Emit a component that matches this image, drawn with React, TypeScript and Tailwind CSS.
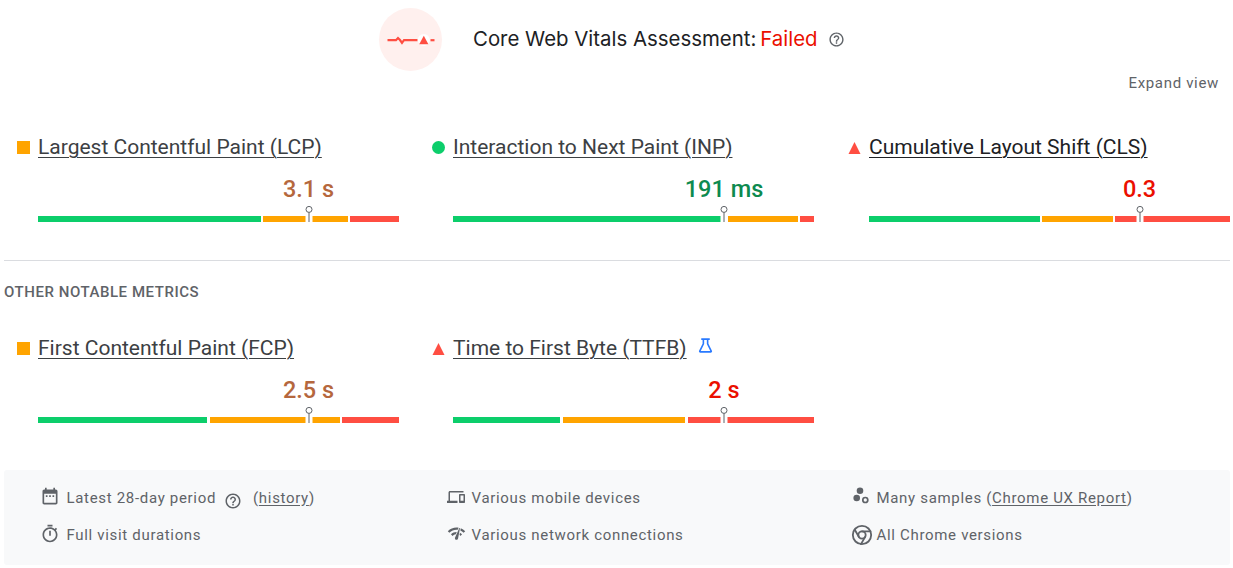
import { Chrome } from "lucide-react";
import type { ReactNode } from "react";

type Rating = "good" | "avg" | "poor";

interface Metric {
  name: string;
  value: string;
  rating: Rating;
  segments: [number, number, number];
  marker: number;
  experimental?: boolean;
  dark?: boolean;
}

const row1: Metric[] = [
  { name: "Largest Contentful Paint (LCP)", value: "3.1 s", rating: "avg", segments: [223, 85, 49], marker: 270.5 },
  { name: "Interaction to Next Paint (INP)", value: "191 ms", rating: "good", segments: [272, 70, 14], marker: 271 },
  { name: "Cumulative Layout Shift (CLS)", value: "0.3", rating: "poor", segments: [171, 71, 115], marker: 270.5, dark: true },
];

const row2: Metric[] = [
  { name: "First Contentful Paint (FCP)", value: "2.5 s", rating: "avg", segments: [169, 130, 57], marker: 270.5 },
  { name: "Time to First Byte (TTFB)", value: "2 s", rating: "poor", segments: [107, 122, 126], marker: 271, experimental: true },
];

const valueColor: Record<Rating, string> = {
  good: "text-[#0d8a4f]",
  avg: "text-[#b5673d]",
  poor: "text-[#eb0f00]",
};

function HelpIcon({ className }: { className: string }) {
  return (
    <svg viewBox="0 0 24 24" className={className} fill="currentColor">
      <path d="M11 18h2v-2h-2v2zm1-16C6.48 2 2 6.48 2 12s4.48 10 10 10 10-4.48 10-10S17.52 2 12 2zm0 18c-4.41 0-8-3.59-8-8s3.59-8 8-8 8 3.59 8 8-3.59 8-8 8zm0-14c-2.21 0-4 1.79-4 4h2c0-1.1.9-2 2-2s2 .9 2 2c0 2-3 1.75-3 5h2c0-2.25 3-2.5 3-5 0-2.21-1.79-4-4-4z" />
    </svg>
  );
}

function RatingIcon({ rating }: { rating: Rating }) {
  if (rating === "good") return <span className="h-[13px] w-[13px] rounded-full bg-[#0cce6b]" />;
  if (rating === "avg") return <span className="h-[13px] w-[13px] bg-[#ffa400]" />;
  return (
    <svg viewBox="0 0 13 13" className="h-[13px] w-[13px]">
      <path d="M6.5 1 L12.5 13 H0.5 Z" fill="#ff4e42" />
    </svg>
  );
}

function Gauge({ m }: { m: Metric }) {
  const [good, avg, poor] = m.segments;
  return (
    <div className="relative mt-[13px] flex h-[6px] w-[361px] justify-between">
      <div className="bg-[#0cce6b]" style={{ width: good }} />
      <div className="bg-[#ffa400]" style={{ width: avg }} />
      <div className="bg-[#ff4e42]" style={{ width: poor }} />
      <div className="absolute top-0 h-[6px] w-[7px] -translate-x-1/2 bg-white" style={{ left: m.marker }} />
      <svg
        viewBox="0 0 8 16"
        className="absolute top-[-10px] h-4 w-2 -translate-x-1/2"
        style={{ left: m.marker }}
      >
        <circle cx="4" cy="3.4" r="3" fill="white" stroke="#5f6368" strokeWidth="1" />
        <path d="M4 6.4 V16" stroke="#5f6368" strokeWidth="1" />
      </svg>
    </div>
  );
}

function MetricCard({ m }: { m: Metric }) {
  return (
    <div className="pl-[13px]">
      <div className="flex h-7 items-center gap-2">
        <div className="flex w-[13px] shrink-0 justify-center">
          <RatingIcon rating={m.rating} />
        </div>
        <a
          className={`whitespace-nowrap text-[21px] leading-7 underline underline-offset-[3px] decoration-[1px] ${
            m.dark ? "text-[#202124]" : "text-[#3c4043]"
          }`}
        >
          {m.name}
        </a>
        {m.experimental && (
          <svg viewBox="0 0 16 16" className="mb-[6px] ml-[2px] h-[17px] w-[17px]" fill="none" stroke="#2979ff" strokeWidth="1.5">
            <path d="M4 2h8M6 2v4.5L2.6 13.2c-.2.4.1.8.5.8h9.8c.4 0 .7-.4.5-.8L10 6.5V2" />
          </svg>
        )}
      </div>
      <div className="ml-[21px]">
        <div className="relative mt-[14px] h-7">
          <span
            className={`absolute top-0 -translate-x-1/2 whitespace-nowrap text-[23.5px] leading-7 font-medium ${valueColor[m.rating]}`}
            style={{ left: m.marker }}
          >
            {m.value}
          </span>
        </div>
        <Gauge m={m} />
      </div>
    </div>
  );
}

function FootItem({ icon, children }: { icon: ReactNode; children: ReactNode }) {
  return (
    <div className="flex h-5 items-center">
      <div className="flex w-[24.5px] shrink-0 items-center">{icon}</div>
      <div className="whitespace-nowrap">{children}</div>
    </div>
  );
}

export default function App() {
  return (
    <div className="w-full overflow-hidden bg-white pl-[4px] pr-[3px] font-['Roboto',sans-serif]">
      <div className="flex items-center pl-[375px] pt-2">
        <div className="flex h-[63px] w-[63px] items-center justify-center rounded-full bg-[#fff0ee]">
          <svg viewBox="0 0 48 12" className="h-3 w-12" fill="none">
            <path d="M0.5 6.2H9L11 4L13 6L15 8.8L17 6.2H30.5" stroke="#ff4e42" strokeWidth="2.2" />
            <circle cx="36.8" cy="6" r="6" fill="#fff" />
            <path d="M36.8 1.8L41.4 10.3H32.2Z" fill="#ff4e42" />
            <path d="M43.5 6.2H47.5" stroke="#ff4e42" strokeWidth="2.2" />
          </svg>
        </div>
        <div className="ml-[31px] flex items-center font-['Inter',sans-serif] text-[20.4px] text-[#202124]">
          <span>Core Web Vitals Assessment:</span>
          <span className="ml-[4px] text-[#eb0f00]">Failed</span>
          <HelpIcon className="ml-[10px] h-[17px] w-[17px] text-[#5f6368]" />
        </div>
      </div>

      <div className="mt-[2px] pr-[11px] text-right text-[15px] leading-5 tracking-[0.67px] text-[#5f6368]">Expand view</div>

      <div className="mt-10 grid grid-cols-[415px_416px_395px]">
        {row1.map((m) => (
          <MetricCard key={m.name} m={m} />
        ))}
      </div>

      <div className="mt-[38px] border-t border-[#dadce0]" />

      <div className="mt-[21px] text-[15px] leading-5 font-medium tracking-[0.55px] text-[#5f6368]">OTHER NOTABLE METRICS</div>

      <div className="mt-8 grid grid-cols-[415px_416px_395px]">
        {row2.map((m) => (
          <MetricCard key={m.name} m={m} />
        ))}
      </div>

      <div className="mt-[47px] h-[95px] rounded-[3px] bg-[#f8f9fa] pl-[38px] pt-[18px] text-[15px] tracking-[0.68px] text-[#5f6368]">
        <div className="grid grid-cols-[405px_405px_1fr] gap-y-[17px]">
          <FootItem
            icon={
              <svg viewBox="0 0 24 24" className="-ml-[2px] -mt-[3px] h-5 w-5 shrink-0 text-[#5f6368]" fill="currentColor">
                <path d="M19 3h-1V1h-2v2H8V1H6v2H5c-1.1 0-2 .9-2 2v14c0 1.1.9 2 2 2h14c1.1 0 2-.9 2-2V5c0-1.1-.9-2-2-2zm0 16H5V8h14v11zM7 10h2v2H7zm4 0h2v2h-2zm4 0h2v2h-2z" />
              </svg>
            }
          >
            Latest 28-day period
            <HelpIcon className="mb-[-4px] ml-[8px] inline-block h-[18px] w-[18px] text-[#5f6368]" />
            <span className="ml-[11px]">
              (<a className="underline underline-offset-2">history</a>)
            </span>
          </FootItem>
          <FootItem
            icon={
              <svg viewBox="0 0 24 24" className="-mt-[3px] h-[18px] w-[18px] shrink-0 text-[#5f6368]" fill="currentColor">
                <path d="M4 6h18V4H4c-1.1 0-2 .9-2 2v11H0v3h14v-3H4V6zm19 2h-6c-.55 0-1 .45-1 1v10c0 .55.45 1 1 1h6c.55 0 1-.45 1-1V9c0-.55-.45-1-1-1zm-1 9h-4v-7h4v7z" />
              </svg>
            }
          >
            Various mobile devices
          </FootItem>
          <FootItem
            icon={
              <svg viewBox="0 0 20 20" className="-ml-[1px] -mt-[2px] h-5 w-5 shrink-0 text-[#5f6368]" fill="currentColor">
                <circle cx="9" cy="3.8" r="3.3" />
                <circle cx="5.7" cy="11" r="3.3" />
                <circle cx="14.3" cy="13" r="2.5" fill="none" stroke="currentColor" strokeWidth="1.7" />
              </svg>
            }
          >
            Many samples (<a className="underline underline-offset-2">Chrome UX Report</a>)
          </FootItem>
          <FootItem
            icon={
              <svg viewBox="0 0 24 24" className="-ml-[2px] -mt-[3px] h-5 w-5 shrink-0 text-[#5f6368]" fill="currentColor">
                <path d="M15 1H9v2h6V1zm-4 13h2V8h-2v6zm8.03-6.61l1.42-1.42c-.43-.51-.9-.99-1.41-1.41l-1.42 1.42C16.07 4.74 14.12 4 12 4c-4.97 0-9 4.03-9 9s4.02 9 9 9 9-4.03 9-9c0-2.12-.74-4.07-1.97-5.61zM12 20c-3.87 0-7-3.13-7-7s3.13-7 7-7 7 3.13 7 7-3.13 7-7 7z" />
              </svg>
            }
          >
            Full visit durations
          </FootItem>
          <FootItem
            icon={
              <svg viewBox="0 0 24 24" className="-mt-[3px] h-[19px] w-[19px] shrink-0 text-[#5f6368]" fill="currentColor">
                <path d="M15.9 5c-.17 0-.32.09-.41.23l-.07.15-5.18 11.65c-.16.29-.26.61-.26.96 0 1.11.9 2.01 2.01 2.01.96 0 1.77-.68 1.96-1.59l.01-.03L16.4 5.5c0-.28-.22-.5-.5-.5zM1 9l2 2c2.88-2.88 6.79-4.08 10.53-3.62l1.19-2.68C9.89 3.84 4.74 5.27 1 9zm20 2l2-2c-1.64-1.64-3.55-2.82-5.59-3.57l-.53 2.82c1.5.62 2.9 1.53 4.12 2.75zm-4 4l2-2c-.8-.8-1.7-1.42-2.66-1.89l-.55 2.92c.42.27.83.59 1.21.97zM5 13l2 2c1.13-1.13 2.56-1.79 4.03-2l1.28-2.88c-2.63-.08-5.3.87-7.31 2.88z" />
              </svg>
            }
          >
            Various network connections
          </FootItem>
          <FootItem icon={<Chrome className="-ml-[1px] h-[22px] w-[22px] shrink-0 text-[#5f6368]" strokeWidth={2} />}>
            All Chrome versions
          </FootItem>
        </div>
      </div>
    </div>
  );
}
